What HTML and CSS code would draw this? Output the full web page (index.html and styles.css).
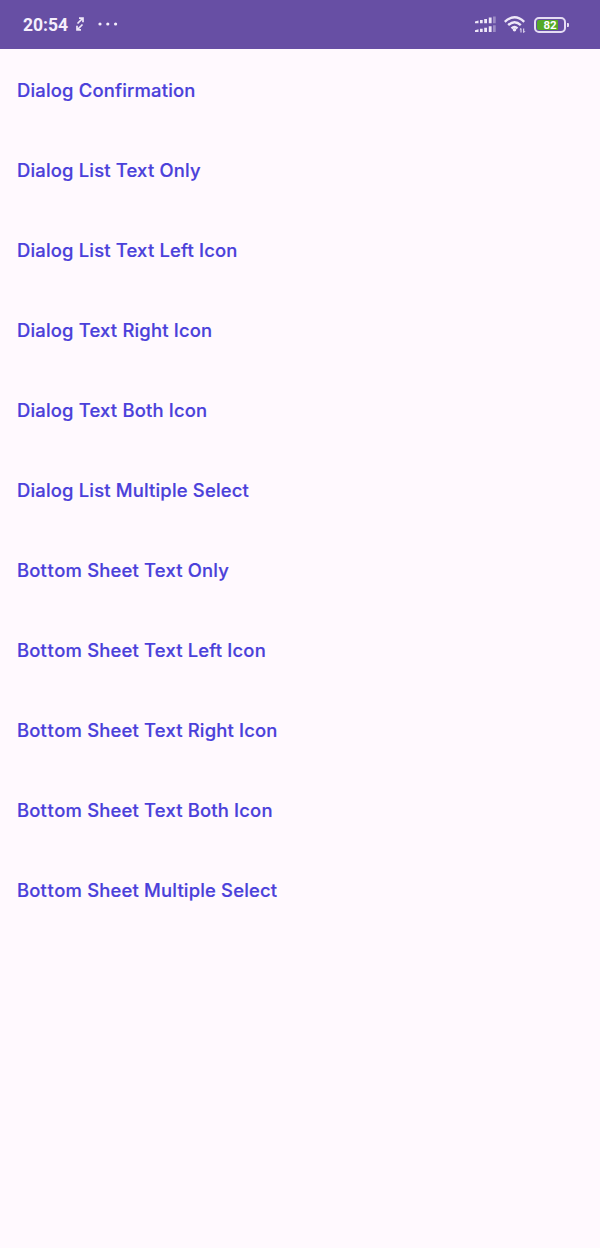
FILE: index.html
```html
<!DOCTYPE html>
<html lang="en">
<head>
<meta charset="utf-8">
<title>Dialogs</title>
<link rel="stylesheet" href="styles.css">
</head>
<body>
<header class="status">
  <span class="time">20:54</span>
  <svg class="sync" width="8" height="14" viewBox="0 0 8 14"><path d="M1.500 6.500 6 2M3 1.200h4v4M6.500 7.500 2 12M1 8.800v4h4"/></svg>
  <svg class="more" width="20" height="4" viewBox="0 0 20 4"><circle cx="2" cy="2" r="1.600"/><circle cx="9.800" cy="2" r="1.600"/><circle cx="17.600" cy="2" r="1.600"/></svg>
  <div class="indicators">
    <svg class="signal" width="22" height="18" viewBox="0 0 22 18"><path d="M0 5.500 3.500 4.500v2.700H0zM5 4h2.700v3.200H5zM9.200 3h2.800v4.200H9.200zM13.800 1.500h2.800v5.700h-2.800zM0 14.300 3.500 13.300V16H0zM5 12.800h2.700V16H5zM9.200 11.800h2.800V16H9.200zM13.800 10.300h2.800V16h-2.800z"/><path class="dim" d="M18 .500h2.700v6.700H18zM18 9.300h2.700V16H18z"/></svg>
    <svg class="wifi" width="22" height="20" viewBox="0 0 22 20"><path d="M.800 6.800Q10.500-2.200 20.200 6.800M4.200 10.200Q10.500 4.400 16.800 10.200M7.500 13.400Q10.500 10.800 13.500 13.400"/><circle class="dot" cx="10.500" cy="14.800" r="1.800"/><path class="data" d="M17 17.500v-4l-1.200 1.200M19.700 13.500v4l1.200-1.200"/></svg>
    <div class="battery"><span class="charge">82</span></div>
  </div>
</header>
<main class="list">
  <a class="item">Dialog Confirmation</a>
  <a class="item">Dialog List Text Only</a>
  <a class="item">Dialog List Text Left Icon</a>
  <a class="item">Dialog Text Right Icon</a>
  <a class="item">Dialog Text Both Icon</a>
  <a class="item">Dialog List Multiple Select</a>
  <a class="item">Bo<span class="open">tt</span>om Sheet Text Only</a>
  <a class="item">Bo<span class="open">tt</span>om Sheet Text Left Icon</a>
  <a class="item">Bo<span class="open">tt</span>om Sheet Text Right Icon</a>
  <a class="item">Bo<span class="open">tt</span>om Sheet Text Both Icon</a>
  <a class="item">Bo<span class="open">tt</span>om Sheet Multiple Select</a>
</main>
</body>
</html>
```
FILE: styles.css
```css
body { margin: 0; min-height: 1248px; background: #fff9fe; font-family: Inter, sans-serif; }
.status { display: flex; align-items: center; height: 49px; padding: 0 31px 0 23px; box-sizing: border-box; background: #674fa4; color: #f5effc; }
.time { width: 46px; font: 700 17.5px Roboto, sans-serif; }
.sync { margin-left: 7px; margin-top: -2px; fill: none; stroke: #eee7f8; stroke-width: 1.7; }
.more { margin-left: 14px; margin-top: -2px; fill: #f5effc; }
.indicators { display: flex; align-items: center; margin-left: auto; }
.signal { margin-top: 1px; fill: #eee7f8; }
.dim { opacity: .4; }
.wifi { margin: 1px 0 0 7px; fill: none; stroke: #eee7f8; stroke-width: 2.4; }
.dot { fill: #eee7f8; stroke: none; }
.data { stroke-width: 1; }
.battery { position: relative; display: flex; width: 32px; height: 16px; margin-left: 8px; margin-right: 3px; padding: 1px; box-sizing: border-box; border: 2px solid #e5ddf3; border-radius: 5px; }
.battery::after { content: ""; position: absolute; left: 31px; top: 4px; width: 2px; height: 4px; border-radius: 0 1px 1px 0; background: #e5ddf3; }
.charge { width: 26px; border-radius: 2px; background: linear-gradient(90deg, #54a928 21px, transparent 21px); color: #fff; font: 700 11.5px/11px Roboto, sans-serif; text-align: center; }
.list { display: flex; flex-direction: column; }
.item { height: 80px; padding-left: 17px; color: #4a40da; font-size: 18.4px; font-weight: 500; letter-spacing: .19px; line-height: 83px; -webkit-text-stroke: .2px #4a40da; }
.open { font-kerning: none; letter-spacing: .6px; }
```
